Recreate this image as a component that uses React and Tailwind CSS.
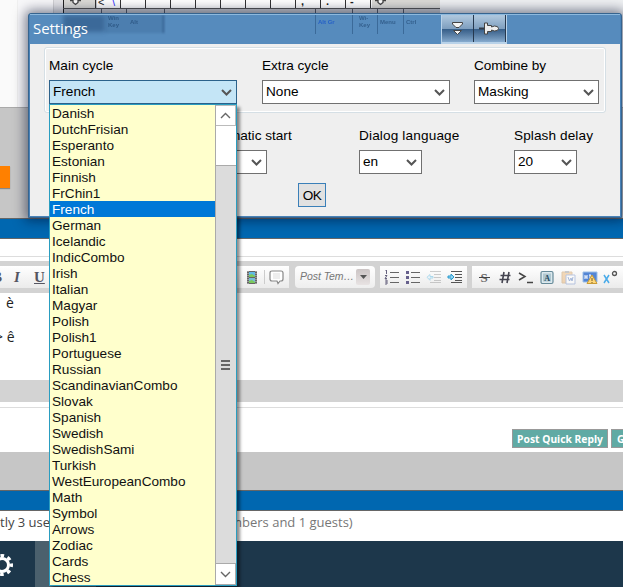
import { clsx } from "clsx";

const CYCLES = [
  "Danish", "DutchFrisian", "Esperanto", "Estonian", "Finnish", "FrChin1",
  "French", "German", "Icelandic", "IndicCombo", "Irish", "Italian",
  "Magyar", "Polish", "Polish1", "Portuguese", "Russian",
  "ScandinavianCombo", "Slovak", "Spanish", "Swedish", "SwedishSami",
  "Turkish", "WestEuropeanCombo", "Math", "Symbol", "Arrows", "Zodiac",
  "Cards", "Chess",
];

const KEY_LINES = [96, 121, 146, 171, 196, 221, 246, 271, 296, 321, 346, 371];

function Keyboard() {
  return (
    <svg width="378" height="44" viewBox="63 0 378 44" className="block" fontFamily="Liberation Sans, sans-serif">
      <rect x="63" width="377" height="44" fill="#c7c9cd" />
      <rect x="64" width="32" height="8" fill="#dcdbd7" />
      <rect x="97" width="275" height="8" fill="#fff" />
      <rect x="372" width="68" height="8" fill="#dcdbd7" />
      {KEY_LINES.map((x) => (
        <rect key={x} x={x - 1} width="1" height="8" fill="#333" />
      ))}
      <rect x="63" width="1" height="44" fill="#222" />
      <rect x="63" y="8" width="377" height="1" fill="#555" />
      {[101, 126, 164, 315, 352, 377, 403].map((x) => (
        <rect key={x} x={x} y="9" width="1" height="25" fill="#555b66" />
      ))}
      <path d="M70 0.500h3v2l2.500 2 2.500-2v-2h3" fill="#fff" stroke="#444" strokeWidth="1.3" />
      <path d="M375 0.500h3v2l2.500 2 2.500-2v-2h3" fill="#fff" stroke="#444" strokeWidth="1.3" />
      <text x="98" y="6" fontSize="11" fill="#222">&lt;</text>
      <text x="112" y="6" fontSize="11" fill="#33f">\</text>
      <text x="301" y="5" fontSize="11" fontWeight="bold" fill="#222">,</text>
      <text x="326" y="5" fontSize="11" fontWeight="bold" fill="#222">.</text>
      <text x="350" y="5" fontSize="11" fontWeight="bold" fill="#222">-</text>
    </svg>
  );
}

function Chevron() {
  return (
    <svg width="11" height="7" viewBox="0 0 11 7" className="shrink-0">
      <path d="M1 1l4.5 4.5L10 1" fill="none" stroke="#555" strokeWidth="2" />
    </svg>
  );
}

function ThinChevron({ up }) {
  return (
    <svg width="11" height="7" viewBox="0 0 11 7" className={clsx(up && "rotate-180")}>
      <path d="M1 1l4.5 4.5L10 1" fill="none" stroke="#666" strokeWidth="1.4" />
    </svg>
  );
}

function Field({ label, value, className, boxClassName, labelClassName, active }) {
  return (
    <div className={className}>
      <div className={clsx("h-[23px] leading-[18px] whitespace-nowrap", labelClassName)}>{label}</div>
      <div
        className={clsx(
          "h-6 border flex items-center justify-between pl-[3px] pr-1",
          active ? "bg-[#c4e5f6] border-[#2c628b]" : "bg-white border-[#707070]",
          boxClassName
        )}
      >
        <span className="pt-px">{value}</span>
        <Chevron />
      </div>
    </div>
  );
}

function Icon({ children }) {
  return (
    <svg width="16" height="16" viewBox="0 0 16 16" className="shrink-0 mx-[2.6px]">
      {children}
    </svg>
  );
}

function ListIcon({ numbered }) {
  return (
    <Icon>
      <path d="M6 3.5h9M6 8.5h9M6 13.5h9" stroke="#666" strokeWidth="1.2" />
      {numbered ? (
        <path d="M1.5 2l1-1v4M1 6.5h2l-2 3h2M1 11h2v4H1M1 13h2" fill="none" stroke="#66637f" />
      ) : (
        <path d="M1 2h3v3H1zM1 7h3v3H1zM1 12h3v3H1z" fill="#66608c" />
      )}
    </Icon>
  );
}

function IndentIcon({ faded }) {
  return (
    <Icon>
      <g opacity={faded ? 0.4 : 1}>
        <path d="M4 2.5h11M8 5.5h7M8 8.5h7M8 11.5h7M4 13.500h11" stroke={faded ? "#888" : "#555"} strokeWidth="1" />
        {faded ? (
          <path d="M7 7.500H4V5.500L1 8.300l3 3V9h3z" fill="#dff3ff" stroke="#42aede" />
        ) : (
          <path d="M1 7h3V5l3 3-3 3V9H1z" fill="#8fd4f4" stroke="#2899cc" />
        )}
      </g>
    </Icon>
  );
}

function Toolbar() {
  const group = "h-[22px] bg-linear-to-b from-white to-[#ebebeb] flex items-center shrink-0";
  return (
    <div className="h-8 bg-[#d3d3d3] py-[5px] flex overflow-hidden">
      <div className={clsx(group, "w-[289px] justify-between")}>
        <div className="flex font-['Liberation_Serif',serif] font-bold text-[15px] text-[#555561]">
          <span className="w-[11px] -ml-[8px]">B</span>
          <span className="w-[20px] pl-[11px] italic">I</span>
          <span className="pl-[11px] underline">U</span>
        </div>
        <div className="flex items-center pr-0.5">
          <Icon>
            <path d="M3 2h10v13H3z" fill="#666" />
            <path d="M5 3h6v5H5z" fill="#60b9e5" />
            <path d="M5 9h6v5H5z" fill="#76bcd9" />
            <path d="M5 6l3-1 3 2v1H5zM5 12l3-1 3 2v1H5z" fill="#7bc95b" />
            <path d="M4 2v13M12 2v13" stroke="#ccc" strokeDasharray="1 1" />
          </Icon>
          <i className="w-px h-3.5 bg-[#ccc] mx-[1px]" />
          <Icon>
            <path d="M4 2h9q2 0 2 2v6q0 2-2 2h-1l-2 2.500L9 12H4q-2 0-2-2V4q0-2 2-2z" fill="#fff" stroke="#888" strokeWidth="1.2" />
            <path d="M5 5h7M5 7h7M5 9h7" stroke="#ddd" />
          </Icon>
        </div>
      </div>
      <div className="ml-1.5 w-20 h-[22px] bg-linear-to-b from-white to-[#eee] rounded-[4px] flex items-center justify-between px-[5px] shrink-0">
        <span className="text-[10.500px] italic text-[#777] whitespace-nowrap tracking-[-0.05px]">Post Tem…</span>
        <span className="w-3.5 h-4 rounded-[2px] bg-linear-to-b from-[#cbc4c4] to-[#e8e3e3] flex items-center justify-center shrink-0">
          <svg width="7" height="4"><path d="M0 0h7L3.500 4z" fill="#555" /></svg>
        </span>
      </div>
      <div className={clsx(group, "ml-[5px] w-[87px] pl-[1px]")}>
        <ListIcon numbered />
        <ListIcon />
        <IndentIcon faded />
        <IndentIcon />
      </div>
      <div className={clsx(group, "ml-[5px] w-40 pl-[1px]")}>
        <Icon>
          <text x="4.500" y="13" fontSize="13" fontFamily="Liberation Serif, serif" fontWeight="bold" fill="#666">S</text>
          <path d="M3 8.500h11" stroke="#444" />
        </Icon>
        <Icon>
          <path d="M7 3L5 14M12 3l-2 11M3.500 6.500h10M2.500 10.500h10" stroke="#444450" strokeWidth="1.600" />
        </Icon>
        <Icon>
          <path d="M1 4l6 3.500-6 3.500M9 13.500h6" fill="none" stroke="#444" strokeWidth="1.5" />
        </Icon>
        <Icon>
          <rect x="2" y="2.500" width="12" height="12" rx="1.500" fill="#dce9ee" stroke="#668a99" strokeWidth="1.200" />
          <rect x="4" y="4.500" width="8" height="8" fill="#b0c8d1" />
          <text x="5.200" y="11.500" fontSize="8" fontFamily="Liberation Serif, serif" fontWeight="bold" fill="#244960">A</text>
        </Icon>
        <Icon>
          <g opacity="0.5">
            <path d="M2 3h10v11H2z" fill="#edb777" stroke="#c79c66" />
            <path d="M5 2h4v2H5z" fill="#999" />
            <path d="M6 6h9v9H6z" fill="#fff" stroke="#7c97cf" />
            <path d="M8 8l1.500 4L11 9l1 3 1-4" fill="none" stroke="#557bc0" />
          </g>
        </Icon>
        <Icon>
          <path d="M1 3h14v10H1z" fill="#5385d4" stroke="#9dc0e8" />
          <path d="M3 6v4M3 8h2M5 6v4M7 6h2M8 6v4" stroke="#fff" />
          <path d="M10 6l5 8.500H5z" fill="#ffd778" stroke="#c99c37" />
          <path d="M10 9v3M10 13v1" stroke="#765b22" />
        </Icon>
        <Icon>
          <path d="M1 6l5 8M6 6l-5 8" stroke="#4aabe9" strokeWidth="1.500" />
          <circle cx="11.500" cy="4.500" r="2" fill="none" stroke="#555" strokeWidth="1.300" />
        </Icon>
      </div>
    </div>
  );
}

function ForumPage() {
  return (
    <div className="w-[623px] h-[587px] overflow-hidden flex flex-col">
      <div className="h-[107px] flex bg-[#eff1f3]">
        <div className="w-[18px] bg-[#fafafa] border-r border-[#f0f0f0]" />
        <div className="w-[35px] bg-[#f7f7f9]" />
        <div className="w-[10px] bg-[#e4e4e7] border-l border-[#d0d0d3]" />
        <Keyboard />
      </div>
      <div className="h-[111px] bg-[#c6c6c6] border-t border-[#aaa] pt-[58px]">
        <div className="w-2.5 h-[22px] bg-[#ff8000] shadow-[0_1px_1px_#888]" />
      </div>
      <div className="h-[21px] bg-[#0067b0] border-y border-[#666]" />
      <div className="h-[18px] border-b border-[#ddd]" />
      <div className="h-1" />
      <Toolbar />
      <div className="h-[87px] text-[14px] text-[#222] font-['Open_Sans',sans-serif]">
        <div className="pl-1.5 h-[34px] leading-[20px]">è</div>
        <div className="-ml-[5px] leading-[20px]">&gt; ê</div>
      </div>
      <div className="h-[22px] bg-[#d3d3d3]" />
      <div className="h-[6px] border-b border-[#ddd]" />
      <div className="h-11 pt-[21px] pl-[512px] flex gap-[3px] text-white font-bold text-[10.300px] font-['Noto_Sans',sans-serif]">
        <span className="w-24 h-[19px] shrink-0 bg-[#60aaa4] border border-[#999] text-center leading-[18px] whitespace-nowrap">Post Quick Reply</span>
        <span className="w-24 h-[19px] shrink-0 bg-[#60aaa4] border border-[#999] pl-[5px] leading-[18px]">G</span>
      </div>
      <div className="h-[38px] bg-[#c6c6c6]" />
      <div className="h-[21px] bg-[#0067b0] border-y border-[#666]" />
      <div className="h-[30px] text-[13px] leading-[23px] font-['Open_Sans',sans-serif] flex">
        <span className="w-[230px] whitespace-nowrap text-[#444]">tly 3 use</span>
        <span className="whitespace-nowrap text-[#777]">mbers and 1 guests)</span>
      </div>
      <div className="h-[46px] bg-[#1d374b] flex">
        <div className="w-[35px] pt-3">
          <svg width="24" height="24" viewBox="0 0 24 24" className="-ml-[10px]">
            <circle cx="12" cy="12" r="6.500" fill="none" stroke="#fff" strokeWidth="3" />
            <circle cx="12" cy="12" r="9.300" fill="none" stroke="#fff" strokeWidth="3.400" strokeDasharray="3.650 3.650" strokeDashoffset="1.800" />
          </svg>
        </div>
        <div className="w-[61px] bg-[#4b606d]" />
      </div>
    </div>
  );
}

function TitleButton({ children }) {
  return (
    <div className="w-8 h-[27px] border-r border-[#26384e] bg-linear-to-b from-[#acc5dc] from-5% via-[#7f9fbf] via-50% to-[#86abcf]">
      <div className="h-full bg-linear-to-b from-transparent from-50% via-[#345c87] via-51% to-transparent flex items-center justify-center">
        {children}
      </div>
    </div>
  );
}

function SettingsDialog() {
  return (
    <div className="absolute left-7 top-[13px] w-[594px] h-[205px] bg-[#4a82b7] border border-[#36648f] rounded-t-[3px] px-[1px] pb-[1px] shadow-[0_0_12px_3px_rgba(0,10,40,0.5)]">
      <div className="relative h-[30px] border-t border-[#8db9de] bg-[#568bbd] flex pl-[3px] overflow-hidden">
        <div className="absolute left-[33px] top-0 w-[42px] h-[17px] bg-[#274f7b]/55 blur-[2px]" />
        <div className="absolute left-[75px] top-0 w-[59px] h-[18px] bg-[#386895]/35 border-r border-[#244c79] blur-[1px]" />
        <div className="absolute left-[285px] top-0 w-[125px] h-[19px] flex text-[6px] leading-[7px] font-bold text-[#1c426e]/60 blur-[0.6px]">
          <span className="w-[37px] border-l border-[#2a5581]/60 pt-1 pl-0.5 text-[#2560c7]">Alt Gr</span>
          <span className="w-[25px] border-l border-[#2a5581]/60 pl-1.5">Wi- Key</span>
          <span className="w-[26px] border-l border-[#2a5581]/60 pt-1 pl-0.5">Menu</span>
          <span className="border-l border-[#2a5581]/60 pt-1 pl-0.5">Ctrl</span>
        </div>
        <div className="absolute left-[78px] top-0 flex text-[6px] leading-[7px] font-bold text-[#1c426e]/60 blur-[0.6px]">
          <span className="w-[22px]">Win Key</span>
          <span className="pt-1">Alt</span>
        </div>
        <span className="relative w-[408px] leading-[27px] text-[15px] text-white tracking-[-0.1px] font-['Open_Sans',sans-serif]">Settings</span>
        <div className="relative flex h-[29px] border-x border-b-2 border-[#b8d2e9]">
          <TitleButton>
            <svg width="11" height="15" viewBox="0 0 11 15">
              <path d="M0.500 1.500h10v1.500L7 6.500H4L0.500 3zM1.500 9.500h8L5.500 13.500z" fill="#f4f4f4" stroke="#444" />
            </svg>
          </TitleButton>
          <TitleButton>
            <svg width="21" height="13" viewBox="0 0 21 13">
              <path d="M0 5.500h6v2H0z" fill="#333c48" />
              <path d="M5.500 1h3v2.500h4v1.500l3-1q4 0 4 2.500t-4 2.500l-3-1v1.500h-4V12h-3z" fill="#eee" stroke="#444" />
            </svg>
          </TitleButton>
        </div>
      </div>
      <div className="h-[172px] bg-[#efefef] pl-[14px] pt-[3px] text-[13.600px] text-black">
        <div className="w-[562px] h-[66px] border border-[#d5dfe5] rounded-[3px] shadow-[inset_0_0_0_1px_#fff] flex pl-[4px] pt-[9px]">
          <Field label="Main cycle" value="French" active className="w-[213px]" boxClassName="w-[188px]" />
          <Field label="Extra cycle" value="None" className="w-[212px]" boxClassName="w-[188px]" />
          <Field label="Combine by" value="Masking" boxClassName="w-[125px]" labelClassName="tracking-[-0.05px]" />
        </div>
        <div className="flex pl-[160px] pt-[14px]">
          <Field label="Automatic start" value="no" className="w-[155px]" boxClassName="w-[63px]" labelClassName="-ml-[3px]" />
          <Field label="Dialog language" value="en" className="w-[155px]" boxClassName="w-[63px]" labelClassName="tracking-[0.15px]" />
          <Field label="Splash delay" value="20" boxClassName="w-[63px]" labelClassName="tracking-[0.1px]" />
        </div>
        <div className="ml-[254px] mt-[9px] w-7 h-6 bg-[#e1e1e1] border border-[#3a7fb8] text-center leading-[23px] tracking-[-0.500px]">OK</div>
      </div>
    </div>
  );
}

function CycleList() {
  return (
    <div className="absolute left-[49px] top-[104px] w-[188px] h-[482px] border border-[#2a9dc0] flex shadow-[3px_3px_3px_rgba(0,0,0,0.45)]">
      <ul className="w-[165px] bg-[#ffffcc] text-[13.600px] leading-[18px] text-[#111]">
        {CYCLES.map((name) => (
          <li key={name} className={clsx("h-4 pl-0.5", name === "French" && "bg-[#0078d7] text-white")}>
            {name}
          </li>
        ))}
      </ul>
      <div className="w-[21px] bg-[#dcdcdc] border-l border-[#aaa] flex flex-col">
        <div className="h-[21px] border border-l-0 border-[#bbb] bg-white flex items-center justify-center">
          <ThinChevron up />
        </div>
        <div className="h-10 bg-white border-b border-[#aaa]" />
        <div className="grow pt-[194px] pl-[5px]">
          <div className="w-[9px] flex flex-col gap-0.5">
            <i className="h-0.5 bg-[#666]" />
            <i className="h-0.5 bg-[#666]" />
            <i className="h-0.5 bg-[#666]" />
          </div>
        </div>
        <div className="h-[22px] border border-l-0 border-[#aaa] bg-white flex items-center justify-center">
          <ThinChevron />
        </div>
      </div>
    </div>
  );
}

export default function App() {
  return (
    <div className="relative w-[623px] h-[587px] overflow-hidden bg-white font-['Liberation_Sans',sans-serif]">
      <ForumPage />
      <SettingsDialog />
      <CycleList />
    </div>
  );
}
